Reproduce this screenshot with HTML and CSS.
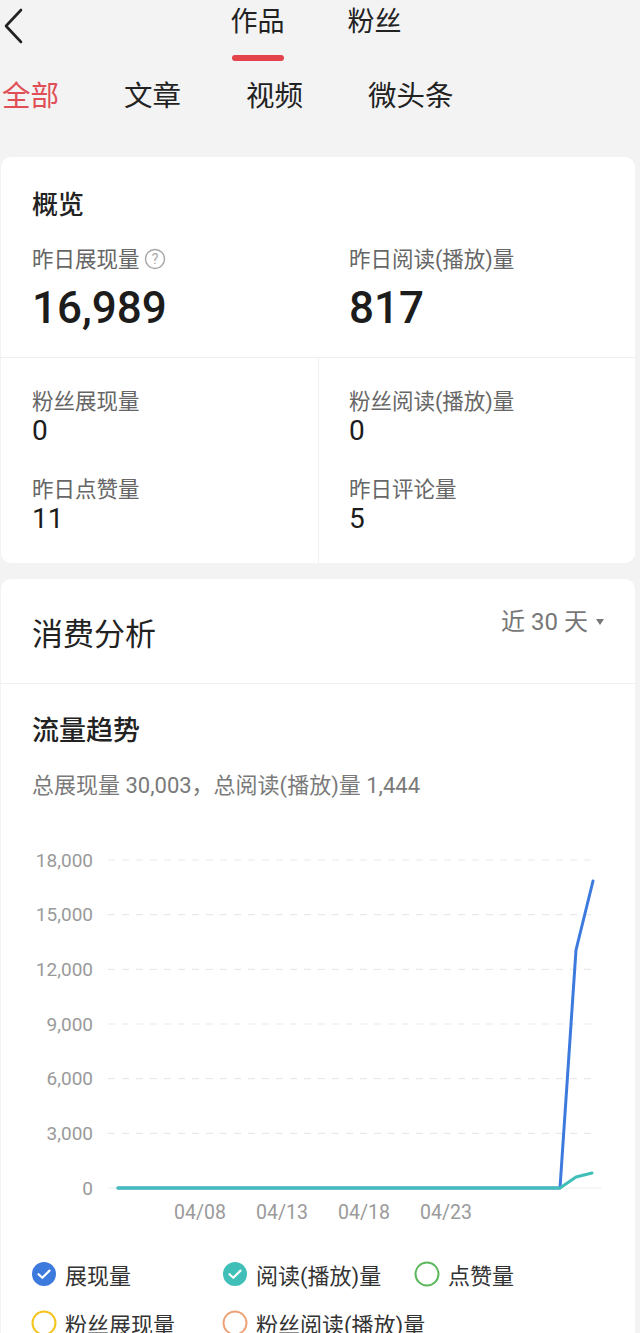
FILE: index.html
```html
<!DOCTYPE html>
<html lang="zh">
<head>
<meta charset="utf-8">
<title>作品数据</title>
<link rel="stylesheet" href="styles.css">
</head>
<body>
<header class="nav">
  <div class="nav-left">
    <svg class="back" width="20" height="36" viewBox="0 0 20 36"><path d="M18 2 L3 18 L18 34" fill="none" stroke="#222" stroke-width="2.6" stroke-linecap="round" stroke-linejoin="round"/></svg>
  </div>
  <div class="nav-tabs">
    <div class="nav-tab active">作品<span class="underline"></span></div>
    <div class="nav-tab">粉丝</div>
  </div>
  <div></div>
</header>

<nav class="subtabs">
  <span class="subtab active">全部</span>
  <span class="subtab">文章</span>
  <span class="subtab">视频</span>
  <span class="subtab">微头条</span>
</nav>

<section class="card overview">
  <div class="ov-top">
    <h2 class="card-title">概览</h2>
    <div class="ov-grid">
      <div class="ov-cell">
        <div class="ov-label">昨日展现量 <svg class="help" width="22" height="22" viewBox="0 0 22 22"><circle cx="11" cy="11" r="9.5" fill="none" stroke="#a6a6a6" stroke-width="1.4"/><text x="11" y="16" text-anchor="middle" font-size="14" fill="#a6a6a6" font-family="Roboto, sans-serif">?</text></svg></div>
        <div class="ov-big">16,989</div>
      </div>
      <div class="ov-cell">
        <div class="ov-label">昨日阅读(播放)量</div>
        <div class="ov-big">817</div>
      </div>
    </div>
  </div>
  <div class="ov-bottom">
    <div class="ov-col">
      <div class="ov-item">
        <div class="ov-label">粉丝展现量</div>
        <div class="ov-num">0</div>
      </div>
      <div class="ov-item">
        <div class="ov-label">昨日点赞量</div>
        <div class="ov-num">11</div>
      </div>
    </div>
    <div class="ov-col right">
      <div class="ov-item">
        <div class="ov-label">粉丝阅读(播放)量</div>
        <div class="ov-num">0</div>
      </div>
      <div class="ov-item">
        <div class="ov-label">昨日评论量</div>
        <div class="ov-num">5</div>
      </div>
    </div>
  </div>
</section>

<section class="card analysis">
  <div class="an-head">
    <h2 class="an-title">消费分析</h2>
    <div class="range">近 30 天<span class="caret"></span></div>
  </div>
  <div class="an-body">
    <h3 class="trend-title">流量趋势</h3>
    <p class="summary">总展现量 30,003，总阅读(播放)量 1,444</p>
    <svg class="chart" width="634" height="400" viewBox="0 0 634 400">
      <g class="grid" stroke="#e9e9e9" stroke-width="1.2" stroke-dasharray="7 7">
        <line x1="107" y1="30" x2="596" y2="30"/>
        <line x1="107" y1="84.7" x2="596" y2="84.7"/>
        <line x1="107" y1="139.3" x2="596" y2="139.3"/>
        <line x1="107" y1="194" x2="596" y2="194"/>
        <line x1="107" y1="248.7" x2="596" y2="248.7"/>
        <line x1="107" y1="303.3" x2="596" y2="303.3"/>
      </g>
      <line x1="107" y1="358" x2="600" y2="358" stroke="#eeeeee" stroke-width="1.2"/>
      <g class="ylabels" font-family="Roboto, sans-serif" font-size="19" fill="#9a9a9a" text-anchor="end">
        <text x="92" y="36.5">18,000</text>
        <text x="92" y="91.2">15,000</text>
        <text x="92" y="145.8">12,000</text>
        <text x="92" y="200.5">9,000</text>
        <text x="92" y="255.2">6,000</text>
        <text x="92" y="309.8">3,000</text>
        <text x="92" y="364.5">0</text>
      </g>
      <g class="xlabels" font-family="Roboto, sans-serif" font-size="19.5" fill="#9a9a9a" text-anchor="middle">
        <text x="199" y="389">04/08</text>
        <text x="281" y="389">04/13</text>
        <text x="363" y="389">04/18</text>
        <text x="445" y="389">04/23</text>
      </g>
      <polyline points="117,358 559,358 575,120 592,51" fill="none" stroke="#3d7ade" stroke-width="3" stroke-linejoin="round" stroke-linecap="round"/>
      <polyline points="117,358 559,358 575,347 591,343" fill="none" stroke="#3fbfb7" stroke-width="3" stroke-linejoin="round" stroke-linecap="round"/>
    </svg>
    <div class="legend">
      <div class="lg-item"><svg width="26" height="26" viewBox="0 0 26 26"><circle cx="13" cy="13" r="12" fill="#3d7ade"/><path d="M7.5 13.2 L11.3 16.8 L18.5 9.6" fill="none" stroke="#fff" stroke-width="2.2" stroke-linecap="round" stroke-linejoin="round"/></svg><span>展现量</span></div>
      <div class="lg-item"><svg width="26" height="26" viewBox="0 0 26 26"><circle cx="13" cy="13" r="12" fill="#3fbfb7"/><path d="M7.5 13.2 L11.3 16.8 L18.5 9.6" fill="none" stroke="#fff" stroke-width="2.2" stroke-linecap="round" stroke-linejoin="round"/></svg><span>阅读(播放)量</span></div>
      <div class="lg-item"><svg width="26" height="26" viewBox="0 0 26 26"><circle cx="13" cy="13" r="11.5" fill="none" stroke="#5cb85c" stroke-width="2"/></svg><span>点赞量</span></div>
      <div class="lg-item"><svg width="26" height="26" viewBox="0 0 26 26"><circle cx="13" cy="13" r="11.5" fill="none" stroke="#f2c41c" stroke-width="2"/></svg><span>粉丝展现量</span></div>
      <div class="lg-item"><svg width="26" height="26" viewBox="0 0 26 26"><circle cx="13" cy="13" r="11.5" fill="none" stroke="#eea47a" stroke-width="2"/></svg><span>粉丝阅读(播放)量</span></div>
    </div>
  </div>
</section>
</body>
</html>
```

FILE: styles.css
```css
* { box-sizing: border-box; }
html, body { margin: 0; padding: 0; }
body {
  width: 640px;
  background: #f3f3f3;
  font-family: Roboto, "Noto Sans CJK SC", sans-serif;
  color: #222;
}
h2, h3, p { margin: 0; font-weight: normal; }

.nav {
  display: grid;
  grid-template-columns: 1fr auto 1fr;
  height: 66px;
}
.nav-left { padding: 8px 0 0 3px; }
.back { display: block; }
.nav-tabs { display: flex; gap: 63px; margin-left: -8px; }
.nav-tab {
  position: relative;
  font-size: 27px;
  line-height: 44px;
  color: #222;
  display: flex;
  flex-direction: column;
  align-items: center;
}
.nav-tab .underline {
  display: block;
  width: 52px;
  height: 6px;
  border-radius: 3px;
  background: #e5434c;
  margin-top: 11px;
}

.subtabs {
  display: flex;
  gap: 65px;
  padding: 11px 0 0 2px;
  height: 91px;
}
.subtab {
  font-size: 28.5px;
  line-height: 40px;
  color: #222;
}
.subtab.active { color: #e04e56; }

.card {
  background: #fff;
  border-radius: 10px;
  margin-left: 1px;
  width: 634px;
}

.overview { overflow: hidden; }
.ov-top {
  padding: 30px 0 24px;
  border-bottom: 1px solid #efefef;
}
.card-title {
  font-size: 26px;
  line-height: 36px;
  font-weight: 500;
  padding-left: 31px;
  color: #222;
}
.ov-grid {
  display: grid;
  grid-template-columns: 317px 317px;
  margin-top: 22px;
}
.ov-cell { padding-left: 31px; }
.ov-label {
  font-size: 21.5px;
  line-height: 30px;
  color: #666;
  display: flex;
  align-items: center;
  gap: 4px;
  white-space: nowrap;
}
.help { display: block; margin-top: -2px; }
.ov-big {
  font-size: 44px;
  line-height: 50px;
  font-weight: 500;
  color: #1c1c1c;
  margin-top: 8px;
}
.ov-bottom {
  display: grid;
  grid-template-columns: 317px 317px;
}
.ov-col {
  padding: 30px 0 29px 31px;
  display: flex;
  flex-direction: column;
  gap: 30px;
}
.ov-col.right { border-left: 1px solid #f0f0f0; padding-left: 30px; }
.ov-item .ov-label { line-height: 28px; }
.ov-num {
  font-size: 28px;
  line-height: 30px;
  color: #1c1c1c;
}

.analysis { margin-top: 16px; padding-bottom: 40px; }
.an-head {
  display: flex;
  justify-content: space-between;
  align-items: flex-start;
  padding: 36px 31px 28px 31px;
  border-bottom: 1px solid #f0f0f0;
}
.an-title {
  font-size: 31px;
  line-height: 40px;
  color: #222;
}
.range {
  font-size: 24px;
  line-height: 30px;
  color: #777;
  margin-top: -8px;
  display: flex;
  align-items: center;
  gap: 8px;
}
.caret {
  width: 0;
  height: 0;
  border-left: 4.5px solid transparent;
  border-right: 4.5px solid transparent;
  border-top: 6px solid #777;
}
.an-body { padding-top: 29px; }
.trend-title {
  font-size: 27px;
  line-height: 36px;
  font-weight: 500;
  padding-left: 31px;
  color: #222;
}
.summary {
  font-size: 22px;
  line-height: 28px;
  color: #7a7a7a;
  padding-left: 31px;
  margin-top: 23px;
  white-space: nowrap;
}
.chart { display: block; margin-top: 30px; }
.legend {
  display: grid;
  grid-template-columns: 191px 192px 191px;
  row-gap: 17px;
  padding-left: 30px;
  margin-top: 28px;
}
.lg-item {
  display: flex;
  align-items: center;
  gap: 8px;
  height: 32px;
  font-size: 22px;
  color: #333;
  white-space: nowrap;
}
.lg-item svg { display: block; flex: none; }
```
